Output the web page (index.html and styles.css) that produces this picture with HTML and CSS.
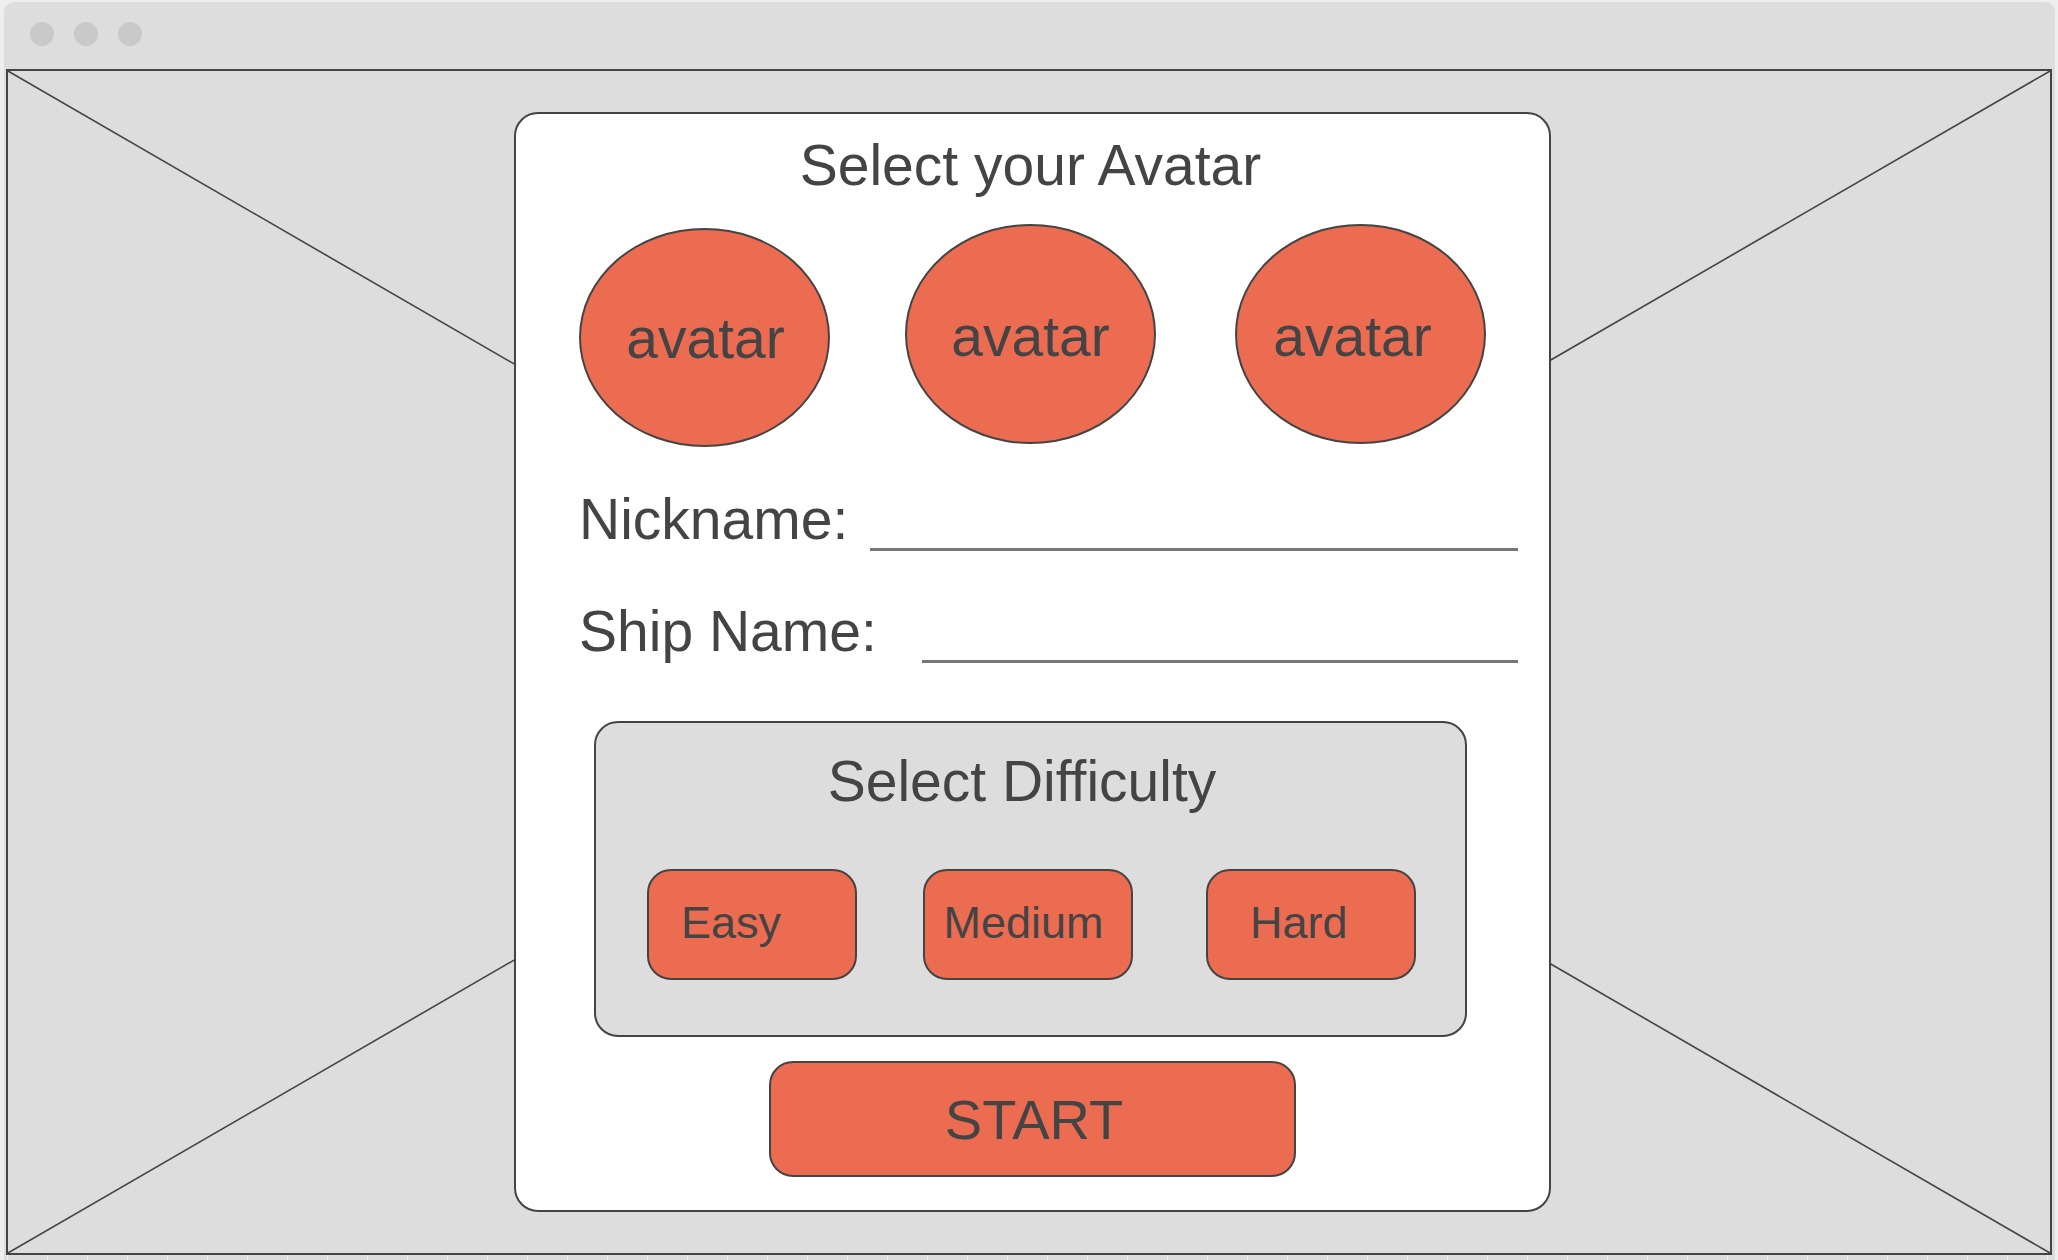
FILE: index.html
```html
<!DOCTYPE html>
<html lang="en">
<head>
<meta charset="utf-8">
<title>Select your Avatar</title>
<link rel="stylesheet" href="styles.css">
</head>
<body>
<div class="window">
  <div class="titlebar">
    <span class="dot"></span>
    <span class="dot"></span>
    <span class="dot"></span>
  </div>
  <div class="frame">
    <svg class="placeholder-x" viewBox="0 0 100 100" preserveAspectRatio="none" aria-hidden="true">
      <line x1="0" y1="0" x2="100" y2="100" vector-effect="non-scaling-stroke"/>
      <line x1="100" y1="0" x2="0" y2="100" vector-effect="non-scaling-stroke"/>
    </svg>
    <div class="card">
      <h1 class="card-title">Select your Avatar</h1>
      <div class="avatars">
        <div class="avatar avatar--low">avatar</div>
        <div class="avatar">avatar</div>
        <div class="avatar avatar--last">avatar</div>
      </div>
      <div class="field-row">
        <span class="field-label">Nickname:</span>
        <span class="field-line field-line--nick"></span>
      </div>
      <div class="field-row field-row--ship">
        <span class="field-label">Ship Name:</span>
        <span class="field-line field-line--ship"></span>
      </div>
      <div class="difficulty">
        <h2 class="difficulty-title">Select Difficulty</h2>
        <div class="difficulty-options">
          <div class="option option--easy">Easy</div>
          <div class="option option--medium">Medium</div>
          <div class="option option--hard">Hard</div>
        </div>
      </div>
      <div class="start">START</div>
    </div>
  </div>
  <div class="ruler"></div>
</div>
</body>
</html>
```
FILE: styles.css
```css
* { box-sizing: border-box; }

html, body {
  margin: 0;
  height: 100%;
  overflow: hidden;
}

body {
  background: #eeeeee;
  padding: 2px 3px 0 4px;
  font-family: "Liberation Sans", Arial, sans-serif;
  color: #444444;
}

.window {
  background: #dddddd;
  border-radius: 10px 10px 0 0;
  height: 1258px;
}

.titlebar {
  height: 67px;
  display: flex;
  gap: 20px;
  padding: 20px 0 0 26px;
}

.dot {
  width: 24px;
  height: 24px;
  border-radius: 50%;
  background: #c9c9c9;
}

.frame {
  position: relative;
  margin: 0 3px 0 2px;
  height: 1186px;
  border: 2px solid #444444;
  padding: 41px 0 0 506px;
}

.placeholder-x {
  position: absolute;
  inset: 0;
  width: 100%;
  height: 100%;
}

.placeholder-x line {
  stroke: #444444;
  stroke-width: 1.6;
}

.card {
  position: relative;
  width: 1037px;
  height: 1100px;
  background: #ffffff;
  border: 2px solid #444444;
  border-radius: 24px;
  padding-top: 19px;
}

.card-title {
  margin: 0;
  font-size: 57px;
  font-weight: normal;
  line-height: 64px;
  text-align: center;
  padding-right: 4px;
}

.avatars {
  margin-top: 27px;
  display: flex;
  justify-content: center;
  align-items: flex-start;
  gap: 75px;
}

.avatar {
  width: 251px;
  height: 220px;
  border-radius: 50%;
  background: #ec6c52;
  border: 2px solid #444444;
  display: flex;
  align-items: center;
  justify-content: center;
  font-size: 57px;
  line-height: 64px;
  padding-top: 4px;
}

.avatar--low {
  margin-top: 4px;
  height: 219px;
  padding-top: 0;
  padding-left: 2px;
}

.avatar--last {
  margin-left: 4px;
  padding-right: 16px;
}

.field-row {
  margin-top: 40px;
  display: flex;
  align-items: flex-end;
  padding: 0 31px 0 63px;
}

.field-row--ship {
  margin-top: 48px;
}

.field-label {
  font-size: 57px;
  line-height: 64px;
}

.field-line {
  flex: 1;
  border-bottom: 3px solid #777777;
}

.field-line--nick { margin-left: 22px; }
.field-line--ship { margin-left: 45px; }

.difficulty {
  margin: 58px 0 0 78px;
  width: 873px;
  height: 316px;
  background: #dddddd;
  border: 2px solid #444444;
  border-radius: 24px;
  padding: 26px 49px 0 51px;
}

.difficulty-title {
  margin: 0;
  font-size: 57px;
  font-weight: normal;
  line-height: 64px;
  text-align: center;
  padding-right: 19px;
}

.difficulty-options {
  margin-top: 56px;
  display: flex;
  justify-content: space-between;
}

.option {
  width: 210px;
  height: 111px;
  background: #ec6c52;
  border: 2px solid #444444;
  border-radius: 24px;
  display: flex;
  align-items: center;
  font-size: 45px;
  line-height: 50px;
  padding-bottom: 3px;
}

.option--easy { padding-left: 32px; }
.option--medium { padding-left: 19px; margin-left: -4px; margin-right: 4px; }
.option--hard { padding-left: 42px; }

.start {
  margin: 24px 0 0 253px;
  width: 527px;
  height: 116px;
  background: #ec6c52;
  border: 2px solid #444444;
  border-radius: 24px;
  display: flex;
  align-items: center;
  justify-content: center;
  font-size: 56px;
  line-height: 62px;
  padding: 1px 0 0 3px;
}

.ruler {
  height: 5px;
  background: repeating-linear-gradient(to right, transparent 0 3px, #f2f2f2 3px 4px, transparent 4px 40px);
}
```
